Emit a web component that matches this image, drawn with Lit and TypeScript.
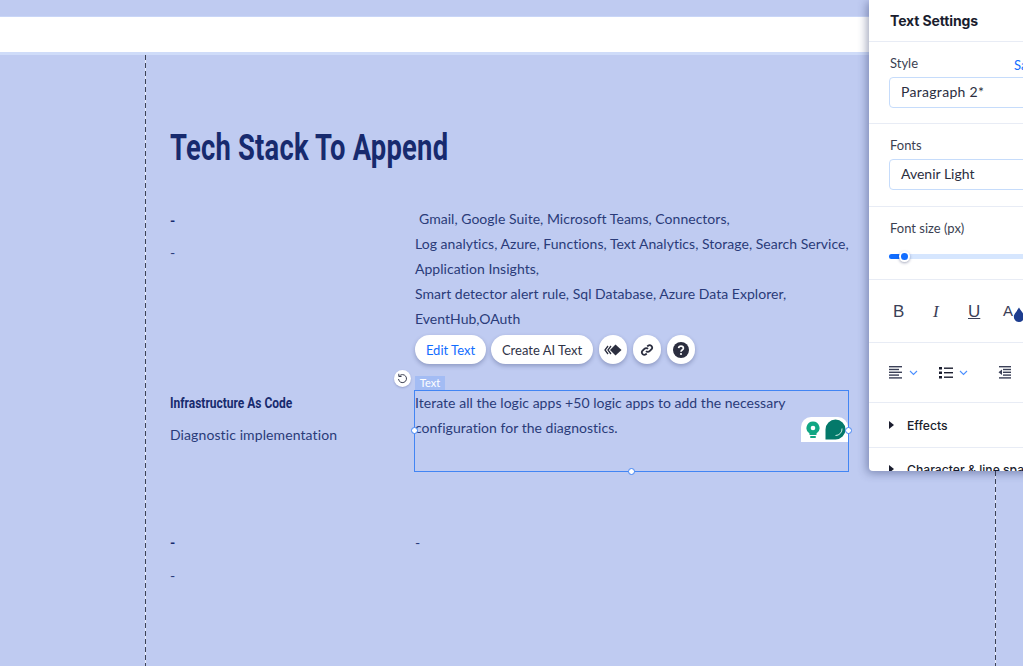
import { LitElement, html, css } from "lit";
import { customElement } from "lit/decorators.js";

@customElement("app-root")
export class AppRoot extends LitElement {
  static styles = css`
    :host { display: block; width: 1023px; height: 666px; overflow: hidden; position: relative; background: #bfcbf1; font-family: "Lato", "Liberation Sans", sans-serif; color: #1e2f70; }
    .topgap { height: 17px; border-bottom: 1px solid #c9d6f7; box-sizing: border-box; }
    .bar { height: 38px; box-sizing: border-box; background: #fff; border-bottom: 3px solid #cfdcf9; }
    .page { height: 611px; margin-left: 145px; padding: 0 0 0 25px; box-sizing: border-box; width: 851px;
      background-image: linear-gradient(#3c4256 0 5px, #e6ebfb 5px 8px), linear-gradient(#3c4256 0 5px, #e6ebfb 5px 8px);
      background-size: 1px 8px, 1px 8px; background-repeat: repeat-y, repeat-y; background-position: left top, right top; }
    h1 { margin: 0; padding-top: 72px; height: 80px; font: bold 36px/42px "Roboto", "Liberation Sans", sans-serif; color: #172a6e; white-space: nowrap; letter-spacing: 0.3px; }
    h1 span { display: inline-block; transform: scaleX(0.76); transform-origin: left center; }
    .row { display: grid; grid-template-columns: 245px 435px; }
    .r1 { height: 183px; }
    .r2 { height: 139px; }
    .txt { font-size: 14px; line-height: 25px; letter-spacing: 0.03px; color: #2a3b79; white-space: nowrap; }
    .r1 .txt { margin-top: -1px; }
    .r3 .txt { padding-top: 1px; }
    .left .b { font-weight: 900; line-height: 25px; font-size: 14px; color: #172a6e; }
    .left .p { margin-top: 8px; font-size: 14px; line-height: 25px; letter-spacing: 0.1px; color: #2a3b79; }
    .r3 .left .p { margin-top: 9px; }
    .cond { padding-top: 1px; font: bold 15px/25px "Roboto", "Liberation Sans", sans-serif !important; color: #172a6e; white-space: nowrap; }
    .cond span { display: inline-block; transform: scaleX(0.8); transform-origin: left center; }
    .r2 .left .p { margin-top: 6px; }
    .indent { padding-left: 4px; }
    .sel { position: relative; width: 435px; height: 82px; box-sizing: border-box; border: 1px solid #4285f4; margin-left: -1px; }
    .sel .txt { margin-top: -1px; }
    .h { position: absolute; width: 7px; height: 7px; border-radius: 50%; background: #fff; border: 1px solid #4285f4; box-sizing: border-box; }
    .hl { left: -4px; top: 36px; } .hr { right: -4px; top: 36px; } .hb { left: 213px; bottom: -4px; }
    .tag { position: absolute; left: 0; top: -15px; width: 30px; height: 14px; background: #a3bcf4; color: #fff; font: 11px/14px "Lato", sans-serif; text-align: center; }
    .rot { position: absolute; left: -21px; top: -21px; width: 17px; height: 17px; background: #fff; border-radius: 50%; display: flex; align-items: center; justify-content: center; box-shadow: 0 1px 2px rgba(30,40,90,.25); }
    .tools { position: absolute; left: 0; top: -56px; display: flex; gap: 6px; }
    .pill { height: 29px; border-radius: 15px; background: #fff; display: flex; align-items: center; justify-content: center; font: 13px "Lato", sans-serif; color: #2f3347; box-shadow: 0 2px 4px rgba(30,40,90,.3); box-sizing: border-box; }
    .pill.blue { color: #116dff; width: 71px; }
    .pill.ai { width: 102px; margin-left: -1px; }
    .pill.c { width: 28px; }
    .gram { position: absolute; right: 0; top: 26px; width: 47px; height: 25px; background: #fff; border-radius: 10px 10px 0 0; display: flex; align-items: center; gap: 5px; padding-left: 5px; box-sizing: border-box; }
    .panel { position: absolute; left: 869px; top: 0; width: 288px; height: 471px; overflow: hidden; background: #fff; border-bottom-left-radius: 4px; box-shadow: -2px 2px 10px rgba(40,50,100,.45); color: #2b2e3f; }
    .sec { border-bottom: 1px solid #e8ecf5; padding: 0 20px; box-sizing: border-box; }
    .title { height: 42px; font: 700 14px/41px "Inter", "Liberation Sans", sans-serif; color: #1a1d2e; letter-spacing: -0.12px; padding-left: 21px; }
    .s1 { height: 82px; padding-top: 12px; }
    .s2 { height: 83px; padding-top: 12px; }
    .s3 { height: 73px; padding-top: 12px; }
    .s4 { height: 63px; display: flex; align-items: center; padding-top: 2px; }
    .s5 { height: 60px; display: flex; align-items: center; }
    .s6 { height: 45px; display: flex; align-items: center; gap: 13px; font: 500 12.2px "Inter", sans-serif; color: #1a1d2e; }
    .s7 { height: 40px; display: flex; gap: 13px; font: 500 12.2px "Inter", sans-serif; color: #1a1d2e; white-space: nowrap; align-items: flex-start; padding-top: 14px; }
    .s7 .tri { margin-top: 3px; }
    .lab { font: 13px/18px "Lato", sans-serif; color: #3b3f52; display: flex; padding-left: 1px; }
    .lab a { color: #116dff; margin-left: 96px; position: relative; top: 2px; }
    .dd { margin-top: 5px; height: 31px; width: 250px; border: 1px solid #c6dcfb; border-radius: 4px; box-sizing: border-box; padding-left: 11px; font: 14px/28px "Lato", sans-serif; letter-spacing: 0.3px; color: #2b2e3f; }
    .s2 .dd { letter-spacing: 0; }
    .track { margin-top: 17px; height: 5px; width: 250px; background: #d6e6fe; border-radius: 3px; position: relative; }
    .fill { width: 14px; height: 5px; background: #116dff; border-radius: 3px; }
    .thumb { position: absolute; left: 10px; top: -3px; width: 11px; height: 11px; border-radius: 50%; background: #116dff; border: 2.5px solid #fff; box-sizing: border-box; box-shadow: 0 1px 3px rgba(30,40,90,.4); }
    .fmt { width: 38px; font: 17px "Liberation Sans", sans-serif; color: #3b4057; padding-left: 4px; box-sizing: border-box; }
    .fmt.i { font-style: italic; font-family: "Liberation Serif", serif; padding-left: 6px; } .fmt.u { text-decoration: underline; padding-left: 3px; }
    .fmt.a { display: flex; align-items: flex-start; font-size: 15px; padding-left: 0; }
    .fmt.a svg { margin-top: 5px; flex: none; }
    .s5 svg { display: block; flex: none; }
    .g1 { margin-left: 6px; margin-right: 21px; }
    .ind { margin-left: 9px; }
    .tri { width: 0; height: 0; border-left: 5px solid #1a1d2e; border-top: 4px solid transparent; border-bottom: 4px solid transparent; }
  `;

  private chevron() {
    return html`<svg class="g1" width="9" height="6" viewBox="0 0 9 6" fill="none" stroke="#4d90ff" stroke-width="1.1"><path d="M1 1l3.5 3.5L8 1"/></svg>`;
  }

  render() {
    return html`
      <div class="topgap"></div>
      <div class="bar"></div>
      <div class="page">
        <h1><span>Tech Stack To Append</span></h1>
        <div class="row r1">
          <div class="left"><div class="b">-</div><div class="p">-</div></div>
          <div class="txt">
            <div class="indent">Gmail, Google Suite, Microsoft Teams, Connectors,</div>
            <div>Log analytics, Azure, Functions, Text Analytics, Storage, Search Service,</div>
            <div>Application Insights,</div>
            <div>Smart detector alert rule, Sql Database, Azure Data Explorer,</div>
            <div>EventHub,OAuth</div>
          </div>
        </div>
        <div class="row r2">
          <div class="left"><div class="b cond"><span>Infrastructure As Code</span></div><div class="p">Diagnostic implementation</div></div>
          <div class="sel">
            <div class="tools">
              <div class="pill blue">Edit Text</div>
              <div class="pill ai">Create AI Text</div>
              <div class="pill c"><svg width="20" height="12" viewBox="0 0 20 12" fill="#2b2e3f"><path d="M12.5 0.5L18.5 6l-6 5.500L7 6z"/><path d="M5 2L2 6l3 4M8 2L5 6l3 4" fill="none" stroke="#2b2e3f" stroke-width="1.3"/></svg></div>
              <div class="pill c"><svg width="14" height="14" viewBox="0 0 14 14" fill="none" stroke="#2b2e3f" stroke-width="1.8"><path d="M6 8.200a2.500 2.500 0 0 0 3.600 0l2-2a2.500 2.500 0 0 0-3.500-3.500l-.8.800"/><path d="M8 5.800a2.500 2.500 0 0 0-3.600 0l-2 2a2.500 2.500 0 0 0 3.500 3.500l.8-.8"/></svg></div>
              <div class="pill c"><svg width="16" height="16" viewBox="0 0 16 16"><circle cx="8" cy="8" r="8" fill="#2b2e3f"/><path d="M5.600 6.200A2.400 2.400 0 0 1 8 4.100c1.400 0 2.400.9 2.400 2.100 0 1.900-2.400 1.700-2.400 3.500" fill="none" stroke="#fff" stroke-width="1.700"/><circle cx="8" cy="12" r="1.100" fill="#fff"/></svg></div>
            </div>
            <div class="rot"><svg width="11" height="11" viewBox="0 0 11 11" fill="none" stroke="#3a3e50" stroke-width="1"><path d="M2.300 3.200A4 4 0 1 1 1.500 6"/><path d="M1.800 0.800v2.700h2.700"/></svg></div>
            <div class="tag">Text</div>
            <div class="txt">Iterate all the logic apps +50 logic apps to add the necessary<br />configuration for the diagnostics.</div>
            <div class="gram">
              <svg width="14" height="18" viewBox="0 0 14 18"><path d="M7 0.500a6.500 6.500 0 0 1 3.500 12v1.500h-7v-1.500A6.500 6.500 0 0 1 7 0.500z" fill="#11a683"/><circle cx="7" cy="7" r="2.300" fill="#fff"/><rect x="4" y="15" width="6" height="2" rx="1" fill="#11a683"/></svg>
              <svg width="21" height="21" viewBox="0 0 21 21"><path d="M10.500 0.500a10 10 0 1 1 0 20H.5v-10a10 10 0 0 1 10-10z" fill="#04796a"/><path d="M17 9.500a6.500 6.500 0 0 1-6.500 7" fill="none" stroke="#d3efe8" stroke-width="1"/></svg>
            </div>
            <div class="h hl"></div><div class="h hr"></div><div class="h hb"></div>
          </div>
        </div>
        <div class="row r3">
          <div class="left"><div class="b">-</div><div class="p">-</div></div>
          <div class="txt">-</div>
        </div>
      </div>
      <div class="panel">
        <div class="sec title">Text Settings</div>
        <div class="sec s1"><div class="lab">Style<a>Save Theme</a></div><div class="dd">Paragraph 2*</div></div>
        <div class="sec s2"><div class="lab">Fonts</div><div class="dd">Avenir Light</div></div>
        <div class="sec s3"><div class="lab">Font size (px)</div><div class="track"><div class="fill"></div><div class="thumb"></div></div></div>
        <div class="sec s4">
          <div class="fmt">B</div><div class="fmt i">I</div><div class="fmt u">U</div>
          <div class="fmt a">A<svg width="12" height="15" viewBox="0 0 10 13"><path d="M5 0.500C7 4 9.500 6 9.500 8.500a4.500 4.500 0 0 1-9 0C.5 6 3 4 5 .5z" fill="#1d3d8f"/></svg></div>
        </div>
        <div class="sec s5">
          <svg width="14" height="13" viewBox="0 0 14 13" fill="#3b4057"><rect width="13" height="1.400"/><rect y="2.800" width="10" height="1.400"/><rect y="5.600" width="13" height="1.400"/><rect y="8.400" width="10" height="1.400"/><rect y="11.200" width="13" height="1.400"/></svg>
          ${this.chevron()}
          <svg width="14" height="12" viewBox="0 0 14 12" fill="#1a1d2e"><rect x="0" y="0" width="3" height="2.500"/><rect x="0" y="4.500" width="3" height="2.500"/><rect x="0" y="9" width="3" height="2.500"/><rect x="5" y=".5" width="9" height="1.400"/><rect x="5" y="5" width="9" height="1.400"/><rect x="5" y="9.500" width="9" height="1.400"/></svg>
          ${this.chevron()}
          <svg class="ind" width="13" height="13" viewBox="0 0 13 13" fill="#3b4057"><rect x="1" width="12" height="1.400"/><rect x="5" y="2.800" width="8" height="1.400"/><rect x="5" y="5.600" width="8" height="1.400"/><rect x="5" y="8.400" width="8" height="1.400"/><rect x="1" y="11.200" width="12" height="1.400"/><path d="M4 3.500v5.500L.5 6.300z"/></svg>
        </div>
        <div class="sec s6"><div class="tri"></div>Effects</div>
        <div class="sec s7"><div class="tri"></div>Character &amp; line spacing</div>
      </div>
    `;
  }
}
